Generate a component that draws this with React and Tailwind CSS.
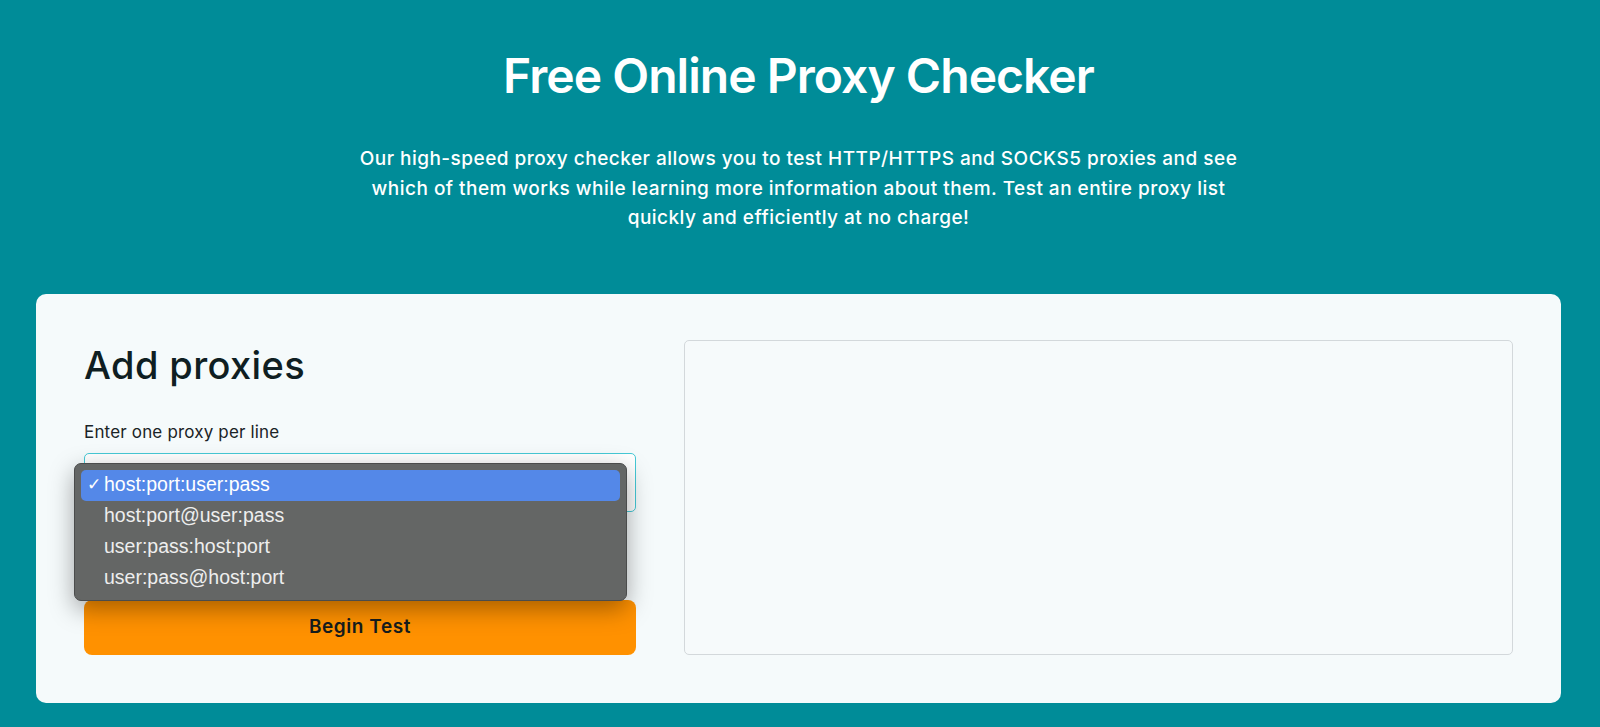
import React from 'react';

const formats = ['host:port:user:pass', 'host:port@user:pass', 'user:pass:host:port', 'user:pass@host:port'];

function FormatMenu({ selected }) {
  return (
    <div className="absolute left-[-10px] top-[10px] z-10 w-[553px] rounded-[7px] border border-[#4b4c4c] bg-[#646665] p-[6px] shadow-[0_8px_24px_rgba(0,0,0,0.35)]">
      {formats.map((f) => (
        <div
          key={f}
          className={`flex h-[31px] items-center rounded-[5px] text-[19.5px] text-[#eeeeee] ${f === selected ? 'bg-[#5488e8] text-white' : ''}`}
          style={{ fontFamily: '"Liberation Sans", Arial, sans-serif' }}
        >
          <span className="w-[23px] pl-[6px] text-[17px]">{f === selected ? '✓' : ''}</span>
          {f}
        </div>
      ))}
    </div>
  );
}

export default function App() {
  return (
    <div className="min-h-screen bg-[#008c98] pt-[47px] pl-[36px] pr-[39px] pb-[24px]" style={{ fontFamily: 'Inter, "Noto Sans", sans-serif' }}>
      {/* Hero */}
      <div className="flex flex-col items-center text-center text-white">
        <h1 className="text-[48px] font-semibold leading-[58px] tracking-[-0.02em]">Free Online Proxy Checker</h1>
        <p className="mt-[39px] max-w-[910px] text-[19px] font-medium leading-[29.5px] tracking-[0.025em]">
          Our high-speed proxy checker allows you to test HTTP/HTTPS and SOCKS5 proxies and see which of them works while learning more information about them. Test an entire proxy list quickly and efficiently at no charge!
        </p>
      </div>

      {/* Checker card */}
      <div className="mt-[61px] grid grid-cols-[552px_1fr] gap-x-12 rounded-[10px] bg-[#f5fafb] p-12">
        <div className="flex flex-col">
          <h2 className="pt-[3px] text-[38px] font-medium leading-[40px] tracking-[0.01em] text-[#0f1e22]">Add proxies</h2>
          <label className="mt-[35px] text-[17px] leading-[24px] tracking-[0.01em] text-[#1a2326]">Enter one proxy per line</label>
          <div className="relative mt-[9px]">
            <div className="h-[59px] rounded-[5px] border border-[#46c9d6] bg-white" />
            <FormatMenu selected="host:port:user:pass" />
          </div>
          <button className="mt-[88px] h-[55px] rounded-[8px] bg-[#ff9100] text-[19px] font-semibold tracking-[0.03em] text-[#151c1e]">
            Begin Test
          </button>
        </div>
        <div className="mt-[-2px] rounded-[5px] border border-[#d3d8db] bg-[#f6fafb]" />
      </div>
    </div>
  );
}
